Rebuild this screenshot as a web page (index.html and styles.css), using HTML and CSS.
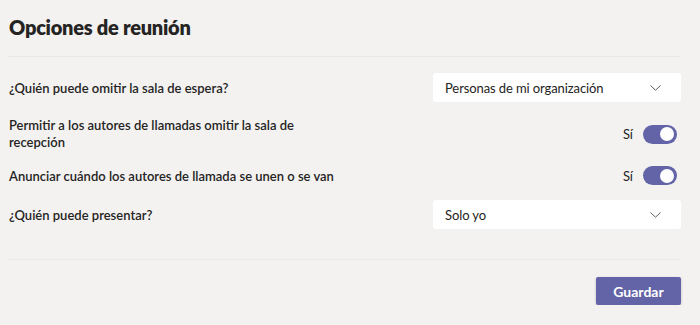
FILE: index.html
```html
<!DOCTYPE html>
<html lang="es">
<head>
<meta charset="utf-8">
<title>Opciones de reunión</title>
<link rel="stylesheet" href="styles.css">
</head>
<body>
<main class="page">
  <header class="header">
    <h1 class="title">Opciones de reunión</h1>
  </header>
  <section class="options">
    <div class="row">
      <div class="label">¿Quién puede omitir la sala de espera?</div>
      <div class="select">
        <span class="select-text">Personas de mi organización</span>
        <svg class="chevron" width="11" height="6" viewBox="0 0 11 6"><path d="M0.5 0.5 L5.5 5.2 L10.5 0.5" fill="none" stroke="#605e5c" stroke-width="1"/></svg>
      </div>
    </div>
    <div class="row">
      <div class="label label-wrap">Permitir a los autores de llamadas omitir la sala de recepción</div>
      <div class="toggle-wrap">
        <span class="toggle-text">Sí</span>
        <span class="toggle"><span class="knob"></span></span>
      </div>
    </div>
    <div class="row">
      <div class="label">Anunciar cuándo los autores de llamada se unen o se van</div>
      <div class="toggle-wrap">
        <span class="toggle-text">Sí</span>
        <span class="toggle"><span class="knob"></span></span>
      </div>
    </div>
    <div class="row">
      <div class="label">¿Quién puede presentar?</div>
      <div class="select">
        <span class="select-text">Solo yo</span>
        <svg class="chevron" width="11" height="6" viewBox="0 0 11 6"><path d="M0.5 0.5 L5.5 5.2 L10.5 0.5" fill="none" stroke="#605e5c" stroke-width="1"/></svg>
      </div>
    </div>
  </section>
  <footer class="footer">
    <button class="save" type="button">Guardar</button>
  </footer>
</main>
</body>
</html>
```
FILE: styles.css
```css
html, body {
  margin: 0;
  padding: 0;
  background: #f3f2f1;
}
body {
  font-family: Lato, "Open Sans", sans-serif;
  color: #252423;
}
.page {
  padding: 13px 19px 0 8px;
}
.header {
  padding-bottom: 15px;
  border-bottom: 1px solid #e9e8e7;
}
.title {
  margin: 0;
  font-size: 20px;
  line-height: 28px;
  font-weight: 800;
  letter-spacing: -0.25px;
  padding-left: 1px;
}
.options {
  display: flex;
  flex-direction: column;
  gap: 15px;
  padding: 16px 0 30px;
  border-bottom: 1px solid #e9e8e7;
}
.row {
  display: flex;
  align-items: center;
  justify-content: space-between;
}
.label {
  font-size: 13px;
  font-weight: 600;
  line-height: 18px;
  padding-left: 1px;
}
.label-wrap {
  width: 300px;
  line-height: 17px;
}
.select {
  width: 248px;
  height: 29px;
  box-sizing: border-box;
  background: #ffffff;
  border-radius: 3px;
  display: flex;
  align-items: center;
  justify-content: space-between;
  padding: 0 20px 0 12px;
}
.select-text {
  font-size: 13px;
  letter-spacing: -0.1px;
  color: #252423;
}
.chevron {
  display: block;
}
.toggle-wrap {
  display: flex;
  align-items: center;
  gap: 10px;
  margin-right: 4px;
}
.toggle-text {
  font-size: 13px;
}
.toggle {
  width: 34px;
  height: 19px;
  border-radius: 10px;
  background: #6264a7;
  display: flex;
  align-items: center;
  justify-content: flex-end;
  padding-right: 3px;
  box-sizing: border-box;
}
.knob {
  width: 14px;
  height: 14px;
  border-radius: 50%;
  background: #ffffff;
}
.footer {
  display: flex;
  justify-content: flex-end;
  padding-top: 17px;
}
.save {
  width: 85px;
  height: 28px;
  border: none;
  border-radius: 2px;
  background: #6264a7;
  color: #ffffff;
  font-family: Lato, "Open Sans", sans-serif;
  font-size: 14px;
  font-weight: 700;
  box-shadow: 0 1px 3px rgba(0,0,0,0.2);
}
```
